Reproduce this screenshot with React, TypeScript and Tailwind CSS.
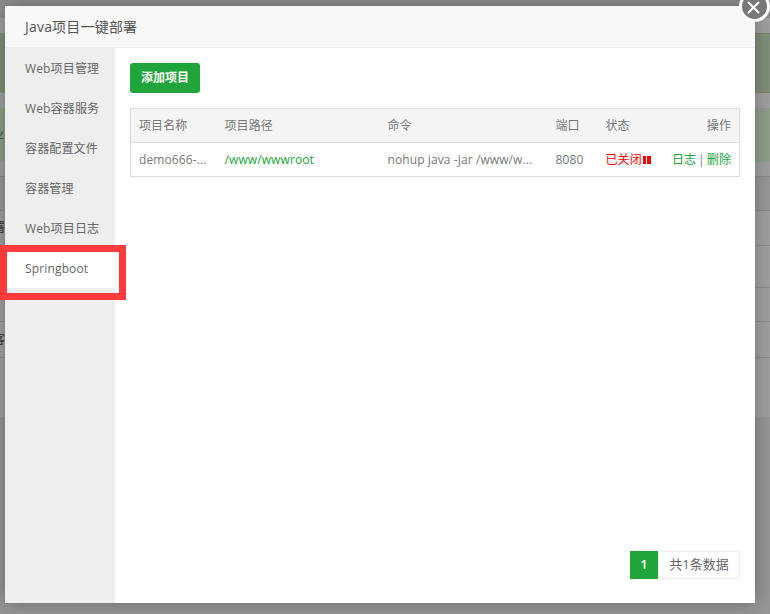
const font = { fontFamily: '"Open Sans","Noto Sans CJK SC",sans-serif' };

const menu = ["Web项目管理", "Web容器服务", "容器配置文件", "容器管理", "Web项目日志", "Springboot"];

function Backdrop() {
  return (
    <div className="absolute inset-0 flex flex-col bg-[#a0a0a0] overflow-hidden text-[12px] text-[#333]">
      <div className="h-[18px] shrink-0 bg-[#8f8f8f] border-b border-[#8a8a8a]" />
      <div className="h-[15px] shrink-0" />
      <div className="h-[60px] shrink-0 mx-[-4px] flex justify-between">
        <div className="w-[30px] bg-[#7f9079]" />
        <div className="w-[40px] bg-[#7f9079] rounded-[4px] border border-[#75866f]" />
      </div>
      <div className="h-[15px] shrink-0" />
      <div className="h-[54px] shrink-0 bg-[#8f9e8a] flex items-center">
        <span className="ml-[-8px] text-[#335533]">业</span>
      </div>
      <div className="h-[15px] shrink-0 border-b border-[#8a8a8a]" />
      <div className="h-[34px] shrink-0 bg-[#989898] border-b border-[#8a8a8a]" />
      <div className="h-[35px] shrink-0 border-b border-[#8a8a8a] bg-[#9f9f9f] flex items-center">
        <span className="ml-[-7px] text-[#333]">署</span>
      </div>
      <div className="h-[42px] shrink-0 border-b border-[#8a8a8a]" />
      <div className="h-[34px] shrink-0 border-b border-[#8a8a8a]" />
      <div className="h-[36px] shrink-0 border-b border-[#8a8a8a] flex items-center">
        <span className="ml-[-7px] text-[#333]">客</span>
      </div>
      <div className="h-[59px] shrink-0" />
      <div className="flex-1 bg-[#969696]" />
    </div>
  );
}

function Sidebar() {
  return (
    <aside className="w-[110px] shrink-0 bg-[#eeeeee] flex flex-col">
      {menu.map((m, i) => (
        <div
          key={m}
          className={`h-[40px] pl-[20px] pt-[2px] flex items-center text-[12px] tracking-[0.15px] text-[#666] ${i === 5 ? "bg-white" : ""}`}
        >
          {m}
        </div>
      ))}
    </aside>
  );
}

function Table() {
  return (
    <table className="w-[610px] table-fixed border-collapse border border-[#ddd] text-[12px] text-[#777] mt-[15px] tracking-[0.1px]">
      <colgroup>
        <col className="w-[86px]" />
        <col className="w-[163px]" />
        <col className="w-[168px]" />
        <col className="w-[50px]" />
        <col className="w-[66px]" />
        <col />
      </colgroup>
      <thead>
        <tr className="h-[34px] bg-[#f5f5f5] border-b border-[#ddd]">
          <th className="font-normal text-left pl-[8px]">项目名称</th>
          <th className="font-normal text-left pl-[8px]">项目路径</th>
          <th className="font-normal text-left pl-[8px]">命令</th>
          <th className="font-normal text-left pl-[8px]">端口</th>
          <th className="font-normal text-left pl-[8px]">状态</th>
          <th className="font-normal text-right pr-[8px]">操作</th>
        </tr>
      </thead>
      <tbody>
        <tr className="h-[34px]">
          <td className="pl-[8px] truncate">demo666-...</td>
          <td className="pl-[8px] text-[#20a53a]">/www/wwwroot</td>
          <td className="pl-[8px] truncate">nohup java -jar /www/w...</td>
          <td className="pl-[8px]">8080</td>
          <td className="pl-[8px] text-[#ff0000] whitespace-nowrap">
            <span className="inline-flex items-center">
              已关闭
              <span className="inline-flex gap-[1px] ml-[1px]">
                <span className="w-[3.5px] h-[8px] bg-[#ff0000]" />
                <span className="w-[3.5px] h-[8px] bg-[#ff0000]" />
              </span>
            </span>
          </td>
          <td className="pr-[8px] text-right whitespace-nowrap">
            <span className="text-[#20a53a]">日志</span>
            <span className="mx-[2px]">|</span>
            <span className="text-[#20a53a]">删除</span>
          </td>
        </tr>
      </tbody>
    </table>
  );
}

export default function App() {
  return (
    <div className="relative w-[770px] h-[614px] overflow-hidden" style={font}>
      <Backdrop />

      <div className="absolute left-[5px] top-[6px] w-[750px] h-[597px] bg-white flex flex-col shadow-[0_0_18px_rgba(0,0,0,0.3)]">
        <header className="h-[42px] shrink-0 bg-[#f8f8f8] border-b border-[#eeeeee] flex items-center pl-[20px] text-[14px] tracking-[0.2px] text-[#555]">
          Java项目一键部署
        </header>
        <div className="flex flex-1 min-h-0">
          <Sidebar />
          <main className="flex-1 flex flex-col px-[15px] pt-[15px] pb-[24px]">
            <button className="w-[70px] h-[30px] bg-[#20a53a] rounded-[3px] text-white text-[12px] font-semibold">
              添加项目
            </button>
            <Table />
            <div className="mt-auto flex justify-end">
              <span className="w-[28px] h-[28px] bg-[#20a53a] text-white text-[13px] font-semibold flex items-center justify-center">
                1
              </span>
              <span className="w-[82px] h-[28px] border border-[#eeeeee] text-[13px] text-[#666] flex items-center justify-center">
                共1条数据
              </span>
            </div>
          </main>
        </div>
      </div>

      <button className="absolute left-[739px] top-[-9px] w-[31px] h-[31px] rounded-full bg-[#777] border-[3px] border-white flex items-center justify-center">
        <svg width="13" height="13" viewBox="0 0 13 13" className="translate-x-[-1px] translate-y-[1px]">
          <path d="M1.5 1.5 11.5 11.5M11.5 1.5 1.5 11.5" stroke="#fff" strokeWidth="2" strokeLinecap="round" />
        </svg>
      </button>

      <div className="absolute left-0 top-[245px] w-[126px] h-[55px] border-[7px] border-[#ff3b3b]" />
    </div>
  );
}
